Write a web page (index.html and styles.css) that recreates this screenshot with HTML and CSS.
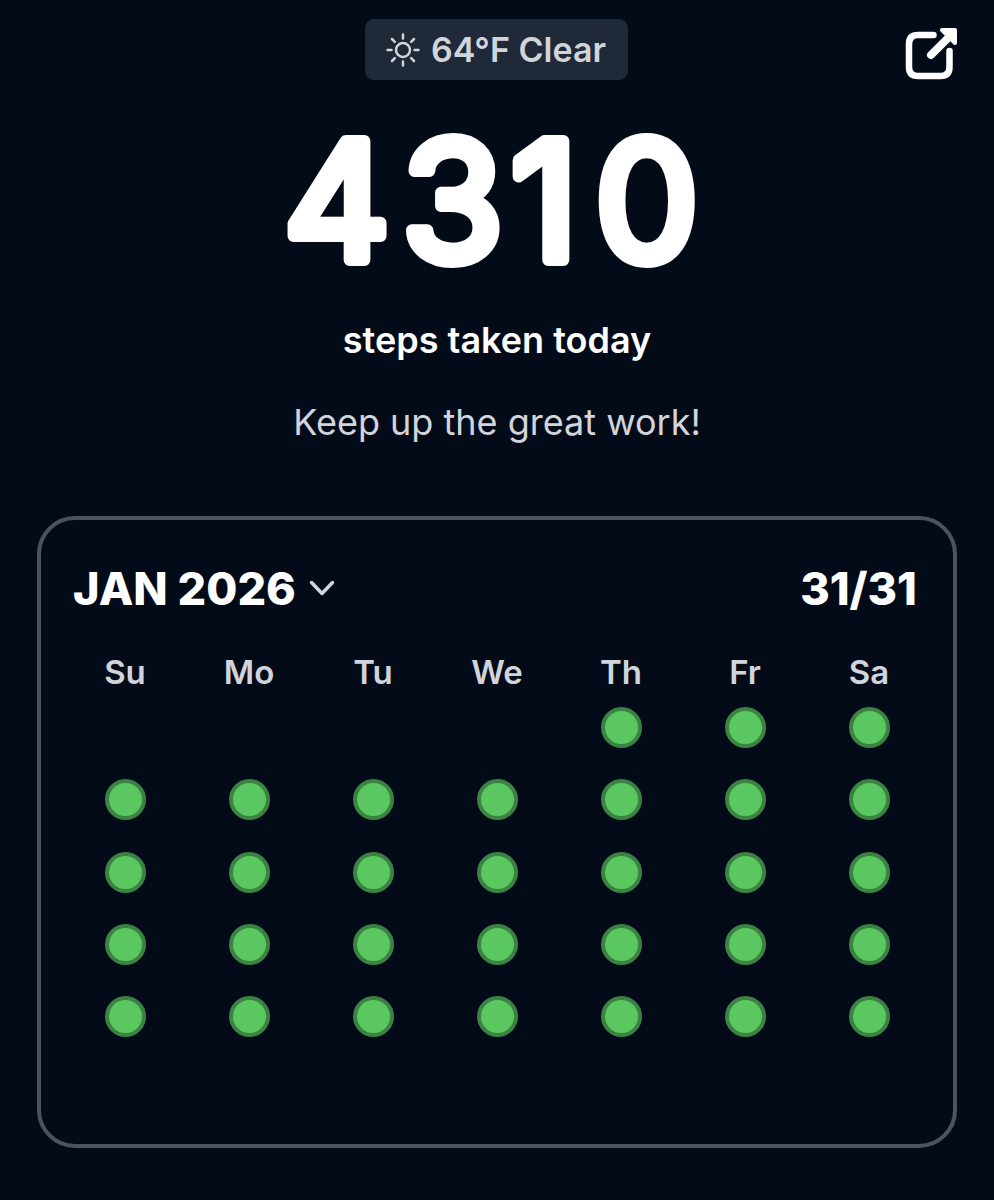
FILE: index.html
```html
<!DOCTYPE html>
<html lang="en">
<head>
    <meta charset="UTF-8">
    <meta name="viewport" content="width=device-width, initial-scale=1.0">
    <title>Steps</title>
    <link rel="stylesheet" href="styles.css">
</head>
<body>
    <header class="topbar">
        <div class="weather">
            <svg class="sun" viewBox="0 0 34 34">
                <circle cx="17" cy="17" r="7"/>
                <path d="M17 1.5v4M17 28.5v4M1.5 17h4M28.5 17h4M6 6l2.8 2.8M25.2 25.2L28 28M28 6l-2.8 2.8M8.8 25.2L6 28"/>
            </svg>
            <span class="weather-text">64°F Clear</span>
        </div>
        <svg class="share" viewBox="0 0 56 56">
            <path class="share-box" d="M30.5 9H15Q6 9 6 18V41Q6 50 15 50H37.500Q46.500 50 46.500 41V25"/>
            <path class="share-line" d="M28 29L44 13"/>
            <path class="share-head" d="M39 4H52V17Z"/>
        </svg>
    </header>
    <section class="summary">
        <svg class="steps" viewBox="0 0 440 150">
            <text x="7 125 234 318" y="135">4310</text>
        </svg>
        <h2><span class="steps-label">steps taken today</span></h2>
        <p><span class="cheer">Keep up the great work!</span></p>
    </section>
    <section class="card">
        <div class="card-header">
            <div class="month">
                <span class="month-name">JAN 2026</span>
                <svg class="chevron" viewBox="0 0 26 16"><path d="M2.500 2.500L13 13.500L23.500 2.500"/></svg>
            </div>
            <span class="total">31/31</span>
        </div>
        <div class="weekdays">
            <span>Su</span><span>Mo</span><span>Tu</span><span>We</span><span>Th</span><span>Fr</span><span>Sa</span>
        </div>
        <div class="days" id="days"></div>
    </section>
    <script>
        const days = document.getElementById('days');
        const firstDay = 4;
        for (let i = firstDay; i < 35; i++) {
            const dot = document.createElement('div');
            dot.className = i === firstDay ? 'dot first' : 'dot';
            days.appendChild(dot);
        }
    </script>
</body>
</html>
```
FILE: styles.css
```css
* {
    box-sizing: border-box;
}
body {
    font-family: Inter, sans-serif;
    background-color: #040b18;
    color: #fff;
    margin: 0;
    min-height: 1200px;
}
svg {
    display: block;
    fill: none;
    stroke-linecap: round;
    stroke-linejoin: round;
}
.topbar {
    display: grid;
    grid-template-columns: 1fr 263px 1fr;
    padding: 19px 35px 0 34px;
}
.weather {
    grid-column: 2;
    height: 61px;
    display: flex;
    align-items: center;
    gap: 11px;
    padding-left: 21px;
    background-color: #1f2937;
    border-radius: 9px;
    color: #d1d5db;
    font-size: 34px;
    font-weight: 600;
    white-space: nowrap;
}
.sun {
    width: 34px;
    height: 34px;
    stroke: #d1d5db;
    stroke-width: 2.5;
}
.share {
    width: 56px;
    height: 56px;
    margin-top: 7px;
    justify-self: end;
    stroke: #fff;
}
.share-box {
    stroke-width: 6.5;
}
.share-line {
    stroke-width: 8;
}
.share-head {
    fill: #fff;
    stroke-width: 4;
}
.summary {
    display: flex;
    flex-direction: column;
    align-items: center;
    padding-top: 43px;
}
.steps {
    width: 440px;
    height: 150px;
}
.steps text {
    font-size: 164px;
    font-weight: 400;
    fill: #fff;
    stroke: #fff;
    stroke-width: 12px;
}
h2, p {
    margin: 0;
    line-height: 48px;
    white-space: nowrap;
}
h2 {
    margin-top: 41px;
    font-size: 36px;
    font-weight: 600;
}
p {
    margin-top: 34px;
    font-size: 36px;
    color: #d1d5db;
}
.card {
    height: 632px;
    margin: 70px 37px 0;
    padding: 40px 22px 0;
    border: 4.5px solid #4b5363;
    border-radius: 38px;
}
.card-header {
    display: flex;
    justify-content: space-between;
    align-items: center;
    height: 56px;
    padding: 0 14px 0 10px;
    font-size: 45px;
    font-weight: 800;
}
.month {
    display: flex;
    align-items: center;
    gap: 13px;
}
.chevron {
    width: 26px;
    height: 16px;
    stroke: #d1d5db;
    stroke-width: 3.5;
}
.weekdays, .days {
    display: grid;
    grid-template-columns: repeat(7, 1fr);
    justify-items: center;
}
.weekdays {
    margin-top: 36px;
    line-height: 40px;
    font-size: 33px;
    font-weight: 600;
    color: #d1d5db;
}
.days {
    margin-top: 15px;
    row-gap: 31.3px;
}
.dot {
    width: 41px;
    height: 41px;
    border: 4px solid #3b8244;
    border-radius: 50%;
    background-color: #5bc760;
}
.dot.first {
    grid-column-start: 5;
}
```
